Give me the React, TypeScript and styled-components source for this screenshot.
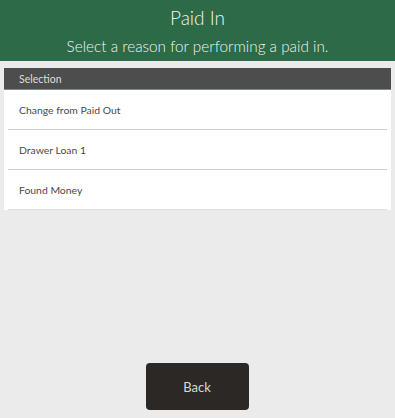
import React from "react";
import styled, { createGlobalStyle } from "styled-components";

const GlobalStyle = createGlobalStyle`
  html, body {
    margin: 0;
    padding: 0;
    background: #ebebeb;
    font-family: Lato, "Open Sans", sans-serif;
  }
`;

const Page = styled.div`
  width: 395px;
  height: 418px;
  display: flex;
  flex-direction: column;
  background: #ebebeb;
  overflow: hidden;
`;

const Header = styled.header`
  height: 61px;
  background: #2d6a47;
  color: #f2f5f2;
  display: flex;
  flex-direction: column;
  align-items: center;
`;

const Title = styled.h1`
  margin: 5px 0 0;
  font-size: 19px;
  font-weight: 300;
  line-height: 26px;
`;

const Subtitle = styled.div`
  font-size: 15.3px;
  font-weight: 300;
  line-height: 22px;
  margin-top: 4px;
`;

const Panel = styled.section`
  margin: 7px 4px 0;
  display: flex;
  flex-direction: column;
`;

const PanelHeader = styled.div`
  height: 22px;
  background: #4d4d4d;
  color: #dddddd;
  font-size: 10.5px;
  line-height: 22px;
  padding-left: 15px;
  border-bottom: 1px solid #7f8c84;
  box-sizing: border-box;
`;

const List = styled.ul`
  list-style: none;
  margin: 0;
  padding: 0 4px;
  background: #ffffff;
`;

const Row = styled.li<{ $last?: boolean }>`
  height: 40px;
  box-sizing: border-box;
  padding-left: 11px;
  display: flex;
  align-items: center;
  font-size: 10.4px;
  color: #4a4a4a;
  border-bottom: 1px solid ${(p) => (p.$last ? "#dedede" : "#cfcfcf")};
`;

const Footer = styled.div`
  margin-top: auto;
  padding-bottom: 8px;
  display: flex;
  justify-content: center;
`;

const BackButton = styled.button`
  width: 103px;
  height: 47px;
  margin-right: 1px;
  border: none;
  border-radius: 4px;
  background: #2b2826;
  color: #d8d8d8;
  font-family: Lato, "Open Sans", sans-serif;
  font-size: 13px;
  cursor: pointer;
`;

const reasons = ["Change from Paid Out", "Drawer Loan 1", "Found Money"];

const App = () => {
  return (
    <Page>
      <GlobalStyle />
      <Header>
        <Title>Paid In</Title>
        <Subtitle>Select a reason for performing a paid in.</Subtitle>
      </Header>
      <Panel>
        <PanelHeader>Selection</PanelHeader>
        <List>
          {reasons.map((r, i) => (
            <Row key={r} $last={i === reasons.length - 1}>
              {r}
            </Row>
          ))}
        </List>
      </Panel>
      <Footer>
        <BackButton>Back</BackButton>
      </Footer>
    </Page>
  );
};

export default App;
